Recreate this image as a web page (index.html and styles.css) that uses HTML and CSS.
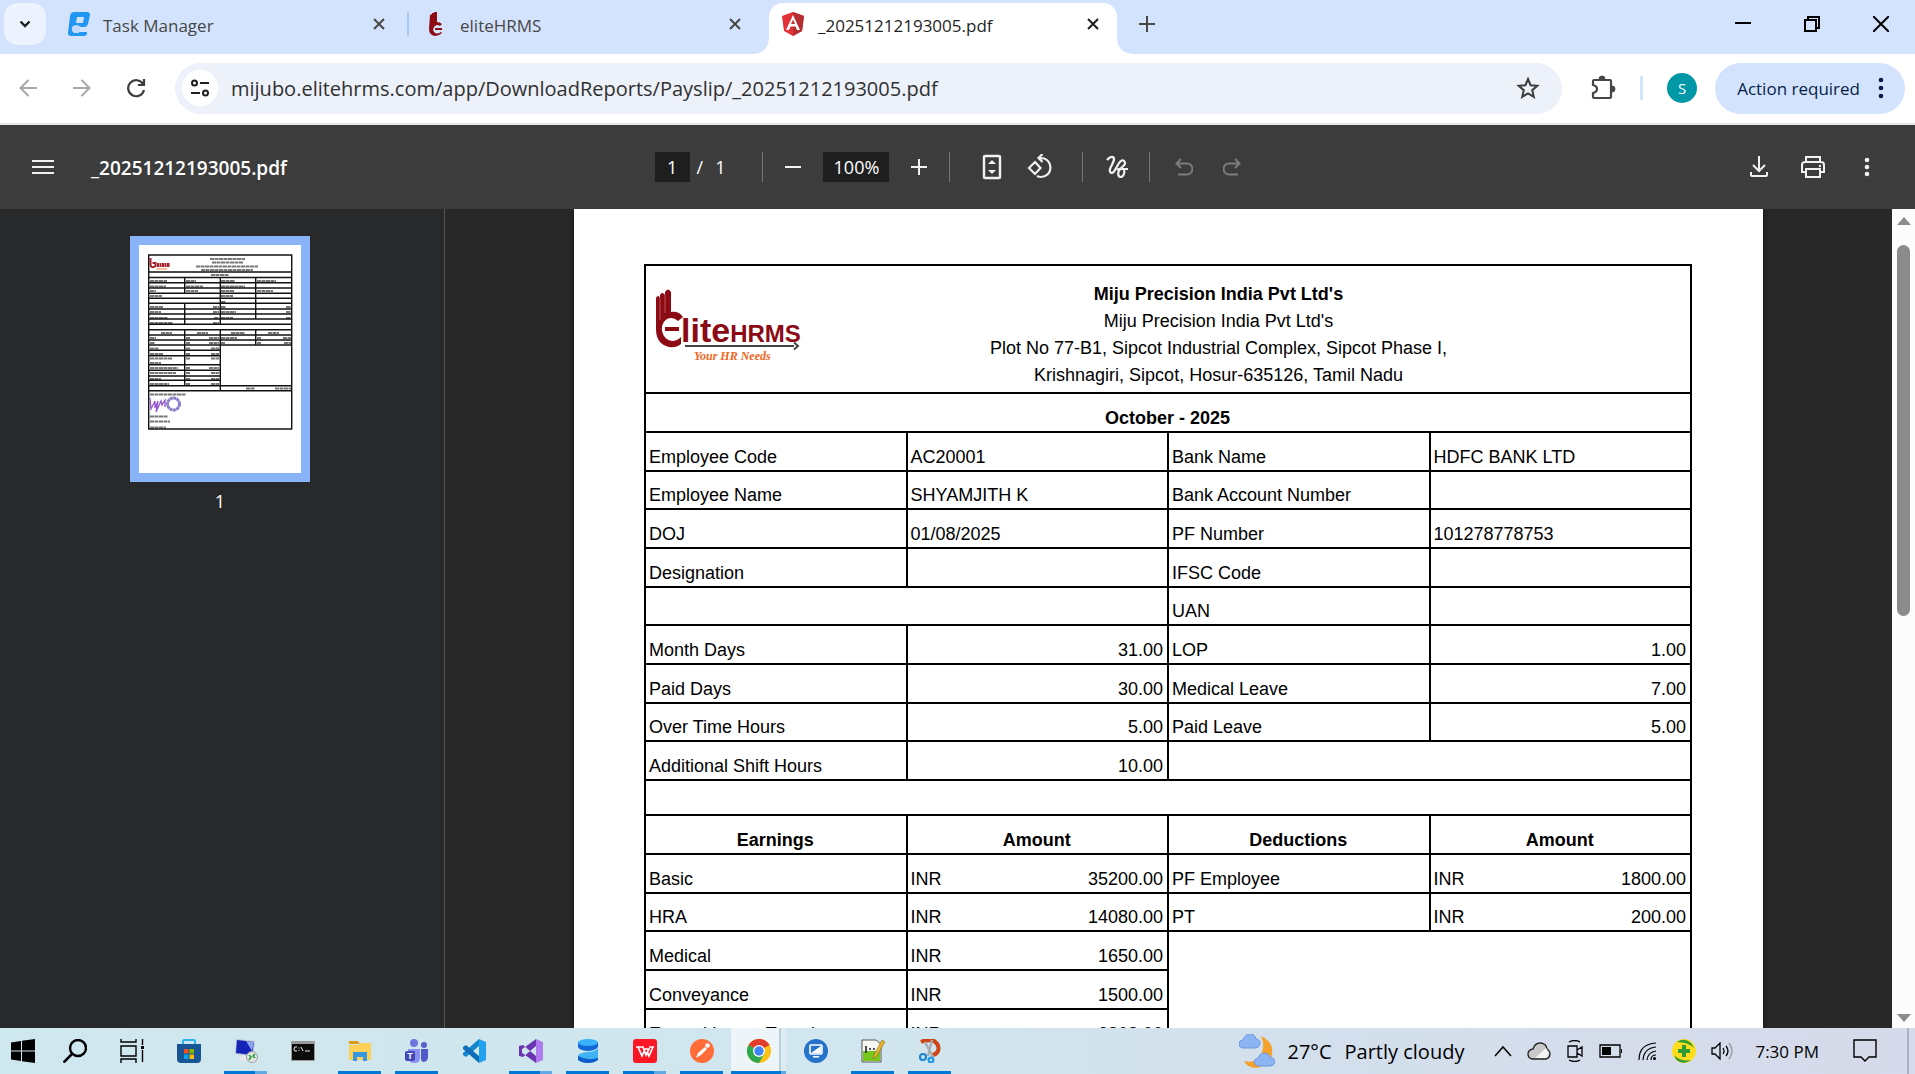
FILE: index.html
```html
<!DOCTYPE html>
<html lang="en">
<head>
    <meta charset="UTF-8">
    <title>_20251212193005.pdf</title>
    <link rel="stylesheet" href="styles.css">
</head>
<body>
<!-- tabs -->
<header class="tab-strip">
    <button class="tab-search" aria-label="Search tabs">
        <svg width="14" height="14" viewBox="0 0 14 14"><path d="M2.500 4.500 7 9l4.500-4.500" fill="none" stroke="#1f1f1f" stroke-width="2.400"/></svg>
    </button>
    <div class="tab">
        <svg width="22" height="24" viewBox="0 0 22 24"><path d="M6 0h13q3 0 3 3l-2 9q-1 3-4 3H9q-2 0-1 3 1 2 4 2h7v1q0 3-3 3H3q-3 0-3-3L2 4q1-4 4-4z" fill="#2196f3"/><path d="M9 5h7l-1 6H8z" fill="#d3e3fd"/><path d="M4 15q4-4 9 0l-2 6H6q-3-2-2-6z" fill="#c3dafa"/></svg>
        <span class="tab-title">Task Manager</span>
        <button class="tab-close" aria-label="Close tab"><svg width="12" height="12" viewBox="0 0 12 12"><path d="M1 1l10 10M11 1 1 11" stroke="#474747" stroke-width="2"/></svg></button>
    </div>
    <span class="tab-line"></span>
    <div class="tab tab-second">
        <svg width="14" height="24" viewBox="0 0 14 24"><path d="M1 3l2-1V1h2V0l3-.500V10q3 0 5 2l-2 2q-3-2-5 0-3 3-1 6 3 3 7 0l1 1q-3 3-7 3-6-1-6-7z" fill="#8e0b16"/><path d="M6 16h7v2H6z" fill="#8e0b16"/></svg>
        <span class="tab-title wide-gap">eliteHRMS</span>
        <button class="tab-close" aria-label="Close tab"><svg width="12" height="12" viewBox="0 0 12 12"><path d="M1 1l10 10M11 1 1 11" stroke="#474747" stroke-width="2"/></svg></button>
    </div>
    <div class="tab tab-active">
        <svg width="24" height="24" viewBox="0 0 24 24"><path d="M12 0 23 4l-2 15-9 5-9-5L1 4z" fill="#e23237"/><path d="M12 0 23 4l-2 15-9 5z" fill="#b52e31"/><path d="M12 3 5 18h3l1.500-3.500h5L16 18h3zM12 7.500l2 4.600h-4z" fill="#fff" fill-rule="evenodd"/></svg>
        <span class="tab-title">_20251212193005.pdf</span>
        <button class="tab-close" aria-label="Close tab"><svg width="12" height="12" viewBox="0 0 12 12"><path d="M1 1l10 10M11 1 1 11" stroke="#1f1f1f" stroke-width="2"/></svg></button>
    </div>
    <button class="tab-new" aria-label="New tab"><svg width="16" height="16" viewBox="0 0 16 16"><path d="M8 0v16M0 8h16" stroke="#474747" stroke-width="2"/></svg></button>
    <div class="window-buttons">
        <button aria-label="Minimize"><svg width="16" height="16" viewBox="0 0 16 16"><path d="M0 7h16" stroke="#000" stroke-width="2"/></svg></button>
        <button aria-label="Restore"><svg width="16" height="16" viewBox="0 0 16 16"><path d="M1 4h11v11H1zM4 4V1h11v11h-3" fill="none" stroke="#000" stroke-width="2"/></svg></button>
        <button aria-label="Close"><svg width="16" height="16" viewBox="0 0 16 16"><path d="M0 0l16 16M16 0 0 16" stroke="#000" stroke-width="2"/></svg></button>
    </div>
</header>

<!-- address bar -->
<nav class="address-bar">
    <div class="nav-buttons">
        <button aria-label="Back"><svg width="18" height="18" viewBox="0 0 18 18"><path d="M18 9H2M9.500 1 1.500 9l8 8" fill="none" stroke="#a8a8a8" stroke-width="2"/></svg></button>
        <button aria-label="Forward"><svg width="18" height="18" viewBox="0 0 18 18"><path d="M0 9h16M8.500 1l8 8-8 8" fill="none" stroke="#a8a8a8" stroke-width="2"/></svg></button>
        <button aria-label="Reload"><svg width="20" height="20" viewBox="0 0 20 20"><path d="M17 6a8 8 0 1 0 1 6M18 1v6h-6" fill="none" stroke="#3c3c3c" stroke-width="2.200"/></svg></button>
    </div>
    <div class="omnibox">
        <button class="site-info" aria-label="Site information"><svg width="20" height="20" viewBox="0 0 20 20"><g fill="none" stroke="#1f1f1f" stroke-width="2"><circle cx="4.500" cy="5" r="2.500"/><circle cx="15.500" cy="15" r="2.500"/><path d="M10 5h9M1 15h9"/></g></svg></button>
        <input class="url" type="text" aria-label="Address" value="mijubo.elitehrms.com/app/DownloadReports/Payslip/_20251212193005.pdf">
        <button aria-label="Bookmark"><svg width="24" height="24" viewBox="0 0 24 24"><path d="M12 3l2.600 6.200 6.700.600-5.100 4.400 1.600 6.600-5.800-3.500-5.800 3.500 1.600-6.600-5.100-4.400 6.700-.600z" fill="none" stroke="#3c3c3c" stroke-width="2"/></svg></button>
    </div>
    <button class="extensions" aria-label="Extensions"><svg width="26" height="26" viewBox="0 0 26 26"><path d="M4 5h16q1 0 1 1v16q0 1-1 1H4q-1 0-1-1v-4q4-1 4-4t-4-4V6q0-1 1-1z" fill="none" stroke="#474747" stroke-width="2.200"/><path d="M9 4a3 3 0 0 1 6 0zM22 11a3 3 0 0 1 0 6z" fill="#474747" stroke="#474747"/></svg></button>
    <span class="bar-line"></span>
    <button class="avatar">S</button>
    <button class="action-pill">Action required
        <svg width="6" height="22" viewBox="0 0 6 22"><g fill="#041e49"><circle cx="3" cy="3" r="2.300"/><circle cx="3" cy="11" r="2.300"/><circle cx="3" cy="19" r="2.300"/></g></svg>
    </button>
</nav>

<!-- pdf toolbar -->
<div class="pdf-toolbar">
    <div class="pdf-left">
        <button aria-label="Menu"><svg width="22" height="16" viewBox="0 0 22 16"><path d="M0 2h22M0 8h22M0 14h22" stroke="#f1f1f1" stroke-width="2"/></svg></button>
        <h1 class="pdf-name">_20251212193005.pdf</h1>
    </div>
    <div class="pdf-center">
        <input class="page-input" type="text" aria-label="Page number" value="1">
        <span class="page-slash">/</span>
        <span class="page-total">1</span>
        <span class="sep sep-wide"></span>
        <button aria-label="Zoom out"><svg width="16" height="16" viewBox="0 0 16 16"><path d="M0 8h16" stroke="#f1f1f1" stroke-width="2"/></svg></button>
        <input class="zoom-input" type="text" aria-label="Zoom level" value="100%">
        <button aria-label="Zoom in"><svg width="16" height="16" viewBox="0 0 16 16"><path d="M0 8h16M8 0v16" stroke="#f1f1f1" stroke-width="2"/></svg></button>
        <span class="sep"></span>
        <button class="tool-first" aria-label="Fit to page"><svg width="20" height="26" viewBox="0 0 20 26"><rect x="2" y="2" width="16" height="22" rx="1" fill="none" stroke="#f1f1f1" stroke-width="2.400"/><path d="M10 6l4 4H6zM10 20l4-4H6z" fill="#f1f1f1"/></svg></button>
        <button class="tool-next" aria-label="Rotate counterclockwise"><svg width="26" height="26" viewBox="0 0 26 26"><path d="M8 8l5.500 6L8 20l-6-6zM11 4h3a9.500 9.500 0 0 1 0 19q-2 0-4-1M15.500 0l-4 4 4 4" fill="none" stroke="#f1f1f1" stroke-width="2.200"/></svg></button>
        <span class="sep sep-tool"></span>
        <button aria-label="Draw"><svg width="24" height="24" viewBox="0 0 24 24"><path d="M2 5q3-4 6-3c3 2-1 7-3 12-1 5 3 5 5 1l4-7q3-4 5-2c3 3-1 5-4 8-3 4-2 8 1 8 4-1 4-8 2-8q-4-1-6 1M18 14h5" fill="none" stroke="#f1f1f1" stroke-width="2.200"/></svg></button>
        <span class="sep sep-history"></span>
        <button aria-label="Undo" disabled><svg width="18" height="18" viewBox="0 0 18 18"><path d="M6 1 1.500 5.500 6 10M2 5.500h10a5 5 0 0 1 0 11H3" fill="none" stroke="#7d7d7d" stroke-width="2"/></svg></button>
        <button class="tool-next" aria-label="Redo" disabled><svg width="18" height="18" viewBox="0 0 18 18"><path d="M12 1l4.500 4.500L12 10M16 5.500H6a5 5 0 0 0 0 11h9" fill="none" stroke="#7d7d7d" stroke-width="2"/></svg></button>
    </div>
    <div class="pdf-right">
        <button aria-label="Download"><svg width="20" height="22" viewBox="0 0 20 22"><path d="M10 0v14M4 9l6 6 6-6M2 16v3q0 1 1 1h14q1 0 1-1v-3" fill="none" stroke="#f1f1f1" stroke-width="2"/></svg></button>
        <button aria-label="Print"><svg width="24" height="22" viewBox="0 0 24 22"><path d="M5 6V1h14v5M5 16H1V9q0-3 3-3h16q3 0 3 3v7h-4M5 13h14v8H5z" fill="none" stroke="#f1f1f1" stroke-width="2"/><circle cx="19" cy="10" r="1.200" fill="#f1f1f1"/></svg></button>
        <button aria-label="More"><svg width="6" height="20" viewBox="0 0 6 20"><g fill="#f1f1f1"><circle cx="3" cy="3" r="2.300"/><circle cx="3" cy="10" r="2.300"/><circle cx="3" cy="17" r="2.300"/></g></svg></button>
    </div>
</div>

<div class="viewer">
    <aside class="thumbs">
        <button class="thumb" aria-label="Page 1">
            <svg width="162" height="228" viewBox="0 0 162 228">
                <rect width="162" height="228" fill="#fff"/>
                <g fill="none" stroke="#777" stroke-width="2" stroke-dasharray="4 .500">
                    <path d="M71 14h35M73 17.500h31M57 21.500h62M62 25h52M72 30h18"/>
                    <path d="M11 36h17M11 41.500h16M11 46h6M11 51h12M47 36h10M47 41.500h17M47 46h12M82 36h14M82 41.500h24M82 46h13M82 51h12M118 36h19M118 46h16M82 57h5"/>
                    <path d="M11 62h13M11 67h11M11 73h18M11 78h23M74 62h6M74 67h6M75 73h5M74 78h6M82 62h5M82 67h15M82 73h12M147 62h5M147 67h5M147 73h5"/>
                    <path d="M22 88h11M58 88h11M92 88h14M129 88h11M11 93h6M11 98h5M11 103.500h9M11 109h13M11 113.500h22M11 118h11M11 123h28M11 128h26M11 134h11M11 139h19"/>
                    <path d="M47 93h4M47 98h4M47 103.500h4M47 109h4M47 113.500h4M47 123h4M47 128h4M47 134h4M47 139h4M70 93h10M70 98h10M72 103.500h8M72 109h8M72 113.500h8M70 123h10M72 128h8M72 134h8M72 139h8M82 93h16M82 98h4M118 93h4M118 98h4M144 93h8M145 98h7M107 143.500h9M136 143.500h16"/>
                    <path d="M11 149.500h36M11 171.500h18M11 176.500h20M11 182.500h16"/>
                </g>
                <g fill="none" stroke="#111" stroke-width="1.400">
                    <path d="M9.700 10h143v174h-143z"/>
                    <path d="M9 27h144M9 32.500h144M9 37.700h144M9 43h144M9 48.300h144M9 53.300h144M9 58.300h144M9 64h144M9 69h144M9 74h144M9 79.300h144M9 84.700h144M9 90h144M9 95h144M9 100h144"/>
                    <path d="M9 105.300h72M9 110.700h72M9 119.700h72M9 125.300h72M9 131h72M9 135.300h72M9 140.700h144M9 145.700h144"/>
                    <path d="M45.700 32.500v15.800M45.700 58.300v21M45.700 84.700v56M81.300 32.500v47M81.300 84.700v61M116.700 32.500V74M116.700 84.700V100"/>
                </g>
                <path d="M11.500 13v7q1 4 5 1v-3h-3" fill="none" stroke="#a3202a" stroke-width="2"/>
                <path d="M18 20h13" stroke="#a3202a" stroke-width="4" stroke-dasharray="2 .500"/>
                <path d="M17 24h11" stroke="#f3873f"/>
                <path d="M11 153l1 11 4-8v7l3-7-2 11 5-11 1 4 3-5v7" fill="none" stroke="#9155d0" stroke-width="1.300"/>
                <circle cx="34.500" cy="159" r="6" fill="none" stroke="#8b7bc8" stroke-width="3" stroke-dasharray="3 .400"/>
            </svg>
        </button>
        <span class="thumb-number">1</span>
    </aside>
    <main class="page-area">
        <article class="page">
            <table class="payslip">
                <tbody>
                <tr class="company-row">
                    <td colspan="4">
                        <div class="company">
                            <svg class="logo" width="148" height="78" viewBox="0 0 148 78">
                                <path d="M1 9q2-4 4 0V6q2-4 5 0V3q3-5 6 0v20q8-1 12 5l-5 4q-5-5-11-2-6 4-5 12 2 9 10 10 5 0 9-4v7q-5 4-12 3Q1 55 1 40z" fill="#8b0a14"/>
                                <path d="M10 38h14v4H10z" fill="#8b0a14"/>
                                <path d="M5 9v22M10 6v18" stroke="#b5525a" fill="none"/>
                                <text x="26" y="53" class="logo-name"><tspan class="logo-lite">lite</tspan><tspan class="logo-hrms">HRMS</tspan></text>
                                <path d="M30 57h109M139 53.500l4 3.500-4 3.500" fill="none" stroke="#444" stroke-width="2"/>
                                <text x="39" y="71" class="logo-tag">Your HR Needs</text>
                            </svg>
                            <div class="company-text">
                                <strong>Miju Precision India Pvt Ltd's</strong><br>
                                Miju Precision India Pvt Ltd's<br>
                                Plot No 77-B1, Sipcot Industrial Complex, Sipcot Phase I,<br>
                                Krishnagiri, Sipcot, Hosur-635126, Tamil Nadu
                            </div>
                        </div>
                    </td>
                </tr>
                <tr><th colspan="4">October - 2025</th></tr>
                <tr><td>Employee Code</td><td>AC20001</td><td>Bank Name</td><td>HDFC BANK LTD</td></tr>
                <tr class="short"><td>Employee Name</td><td>SHYAMJITH K</td><td>Bank Account Number</td><td></td></tr>
                <tr><td>DOJ</td><td>01/08/2025</td><td>PF Number</td><td>101278778753</td></tr>
                <tr><td>Designation</td><td></td><td>IFSC Code</td><td></td></tr>
                <tr class="short"><td colspan="2"></td><td>UAN</td><td></td></tr>
                <tr><td>Month Days</td><td class="num">31.00</td><td>LOP</td><td class="num">1.00</td></tr>
                <tr><td>Paid Days</td><td class="num">30.00</td><td>Medical Leave</td><td class="num">7.00</td></tr>
                <tr class="short"><td>Over Time Hours</td><td class="num">5.00</td><td>Paid Leave</td><td class="num">5.00</td></tr>
                <tr><td>Additional Shift Hours</td><td class="num">10.00</td><td colspan="2"></td></tr>
                <tr class="spacer"><td colspan="4"></td></tr>
                <tr><th>Earnings</th><th>Amount</th><th>Deductions</th><th>Amount</th></tr>
                <tr><td>Basic</td><td><div class="money"><span>INR</span><span>35200.00</span></div></td><td>PF Employee</td><td><div class="money"><span>INR</span><span>1800.00</span></div></td></tr>
                <tr class="short"><td>HRA</td><td><div class="money"><span>INR</span><span>14080.00</span></div></td><td>PT</td><td><div class="money"><span>INR</span><span>200.00</span></div></td></tr>
                <tr><td>Medical</td><td><div class="money"><span>INR</span><span>1650.00</span></div></td><td colspan="2" rowspan="3"></td></tr>
                <tr><td>Conveyance</td><td><div class="money"><span>INR</span><span>1500.00</span></div></td></tr>
                <tr class="two-lines"><td>Earned Leave Travel<br>Allowance</td><td><div class="money"><span>INR</span><span>2808.00</span></div></td></tr>
                </tbody>
            </table>
        </article>
    </main>
    <div class="scrollbar">
        <span class="arrow-up"></span>
        <span class="scroll-thumb"></span>
        <span class="arrow-down"></span>
    </div>
</div>

<!-- taskbar -->
<footer class="taskbar">
    <div class="apps">
        <button class="app-start" aria-label="Start"><svg width="24" height="24" viewBox="0 0 24 24"><path d="M0 3.400 10 2v9.500H0zM11 1.800 24 0v11.500H11zM0 12.500h10V22L0 20.600zM11 12.500h13V24l-13-1.800z"/></svg></button>
        <button aria-label="Search"><svg width="24" height="24" viewBox="0 0 24 24"><circle cx="15" cy="9" r="8" fill="none" stroke="#000" stroke-width="2.400"/><path d="M9 15l-8.500 8.500" stroke="#000" stroke-width="2.600"/></svg></button>
        <button aria-label="Task view"><svg width="24" height="24" viewBox="0 0 24 24"><path d="M1 0v3h15V0M1 24v-4h15v4M1 7h15v10H1zM22.500 0v6M22.500 11v12" fill="none" stroke="#000" stroke-width="1.400"/><path d="M21 7h3v3h-3z"/></svg></button>
        <button aria-label="Microsoft Store"><svg width="24" height="24" viewBox="0 0 24 24"><path d="M6 6V2q0-1 1-1h10q1 0 1 1v4" fill="none" stroke="#2ab5ee" stroke-width="2"/><path d="M0 5h24v15q0 4-4 4H4q-4 0-4-4z" fill="#175596"/><path d="M7 10h4.500v4.500H7z" fill="#f25022"/><path d="M12.500 10H17v4.500h-4.500z" fill="#7fba00"/><path d="M7 15.500h4.500V20H7z" fill="#00a4ef"/><path d="M12.500 15.500H17V20h-4.500z" fill="#ffb900"/></svg></button>
        <button class="open multi" aria-label="Remote Desktop"><svg width="24" height="24" viewBox="0 0 24 24"><path d="M2 0l19 2-2 15-18-2z" fill="#b9c1cd"/><path d="M3 1l17 2-2 13-16-2z" fill="#1523b8"/><path d="M12 2l8 1-2 9z" fill="#8ba4f0"/><path d="M6 17h8v5H4z" fill="#e3e6ea"/><circle cx="18" cy="18" r="5.500" fill="#e3e6e2" stroke="#9aa0a0"/><path d="M15 16l2 2-2 3M21 15l-2 2 2 2" fill="none" stroke="#2f9e35" stroke-width="1.600"/></svg></button>
        <button aria-label="Command Prompt"><svg width="24" height="20" viewBox="0 0 24 20"><rect width="24" height="20" rx="1" fill="#9a9a9a"/><path d="M1 3h22v16H1z" fill="#0b0b0b"/><path d="M6 6q-3-1-3 2t3 2M8 6.500v1M8 9v1M10 6l2 4M14 10h5" fill="none" stroke="#eee"/></svg></button>
        <button class="open" aria-label="File Explorer"><svg width="24" height="20" viewBox="0 0 24 20"><path d="M1 0h9l2 3h-11z" fill="#e09a14"/><path d="M1 4h10l2-2h10v17H1z" fill="#ffd057"/><path d="M5 20v-8q0-1 1-1h12q1 0 1 1v8h-4v-4H9v4z" fill="#3895e0"/></svg></button>
        <button class="open" aria-label="Teams"><svg width="24" height="24" viewBox="0 0 24 24"><circle cx="9" cy="4" r="4" fill="#6f75dd"/><circle cx="19" cy="6" r="3" fill="#5a61cf"/><path d="M3 10h12v9q0 5-6 5-5 0-6-5z" fill="#8b8ff0"/><path d="M16 10h7v8q0 4-4 5-3 0-3-4z" fill="#5058cc"/><rect y="12" width="10" height="10" rx="2" fill="#4048b8"/><text x="5" y="20" class="app-letter">T</text></svg></button>
        <button aria-label="VS Code"><svg width="24" height="24" viewBox="0 0 24 24"><path d="M17 0l7 3v18l-7 3z" fill="#22a2ee"/><path d="M17 0v7L4 18l-3-2V14z" fill="#1485cf"/><path d="M17 24v-7L4 6 1 8v2z" fill="#0e6fb8"/></svg></button>
        <button class="open multi" aria-label="Visual Studio"><svg width="24" height="24" viewBox="0 0 24 24"><path d="M17 0l7 3v18l-7 3z" fill="#b07af0"/><path d="M17 0v7L4 18l-4-1V7l4-1 13 11v7L4 14.500 3 14v-4l1-.500z" fill="#6a35b1" fill-rule="evenodd"/></svg></button>
        <button class="open" aria-label="SQL tools"><svg width="22" height="24" viewBox="0 0 22 24"><path d="M1 3v5q1 3 9 4 8 0 11-4V3z" fill="#1368d8"/><ellipse cx="11" cy="3.500" rx="10" ry="3.500" fill="#38b2f8"/><path d="M21 9v12q-4 3-10 3T1 21v-4q0-3 9-4 8 0 11-4z" fill="#3fb4f5"/><path d="M1 17q9 5 20 2v2q-4 3-10 3T1 21z" fill="#0f5ccb"/></svg></button>
        <button class="open multi" aria-label="WPS Office"><svg width="24" height="24" viewBox="0 0 24 24"><rect width="24" height="24" rx="3" fill="#fb1724"/><path d="M3 8h7l3 8 3-6h-5M5 8l4 9 3-7M20 8l-4 9-2-4M16 8h5" fill="none" stroke="#fff" stroke-width="1.700"/></svg></button>
        <button class="open" aria-label="Postman"><svg width="24" height="24" viewBox="0 0 24 24"><circle cx="12" cy="12" r="12" fill="#ff6c37"/><path d="M6 19l2-5 7-6 2 2-6 6z" fill="#fff"/><circle cx="17.500" cy="6.500" r="2.300" fill="#fff"/></svg></button>
        <button class="open multi current" aria-label="Chrome"><svg width="24" height="24" viewBox="0 0 24 24"><circle cx="12" cy="12" r="12" fill="#fbc116"/><path d="M12 12 1.600 6a12 12 0 0 1 20.800 0z" fill="#e33b2e"/><path d="M12 12 1.600 6A12 12 0 0 0 12 24l5.200-9z" fill="#2da94f"/><circle cx="12" cy="12" r="6" fill="#fff"/><circle cx="12" cy="12" r="4.700" fill="#4285f4"/></svg></button>
        <button aria-label="Remote access"><svg width="24" height="24" viewBox="0 0 24 24"><circle cx="12" cy="12" r="12" fill="#2673cc"/><rect x="6" y="6" width="12" height="9" rx="1" fill="none" stroke="#fff" stroke-width="1.600"/><path d="M7 14l10-7v7zM9 17h6v1.500H9z" fill="#fff"/></svg></button>
        <button class="open" aria-label="Notepad++"><svg width="24" height="24" viewBox="0 0 24 24"><path d="M1 1h14l5 4v18H1z" fill="#f6f8f2" stroke="#555"/><path d="M2 12h17v10H2z" fill="#76c61b"/><path d="M5 7v7M8 10h2M12 10h2" stroke="#222" stroke-width="1.600"/><path d="M21 1l3 2-9 15-3 2 1-4z" fill="#e9b632" stroke="#8a6712" stroke-width=".600"/></svg></button>
        <button class="open" aria-label="Snipping Tool"><svg width="22" height="24" viewBox="0 0 22 24"><path d="M2 3q6-3 13-1 6 4 4 10-2 4-6 4" fill="none" stroke="#cf4315" stroke-width="4"/><path d="M13 1l-4 16M6 3l8 15" stroke="#a8adb2" stroke-width="2.400"/><circle cx="4" cy="18" r="3" fill="none" stroke="#1d87d6" stroke-width="2.200"/><circle cx="12" cy="21" r="2.400" fill="none" stroke="#1d9be6" stroke-width="2.200"/></svg></button>
    </div>
    <div class="tray">
        <button class="weather">
            <svg width="36" height="34" viewBox="0 0 36 34"><path d="M22 2q13 6 11 18-3 12-15 14-10 0-13-7 10 3 16-5 6-9 1-20z" fill="#f5a02a"/><path d="M5 14q-5 0-5-4 0-4 4-4 2-6 7-6 5 0 6 5 5 1 4 5-1 4-5 4zM20 32q-4 0-5-4 0-3 4-4 2-5 6-5 5 0 6 4 5 1 5 5-1 4-5 4z" fill="#8db4f2" stroke="#6c97e2"/></svg>
            <span class="temperature">27°C</span><span>Partly cloudy</span>
        </button>
        <div class="tray-icons">
            <button aria-label="Show hidden icons"><svg width="18" height="12" viewBox="0 0 18 12"><path d="M1 11l8-9 8 9" fill="none" stroke="#000" stroke-width="1.500"/></svg></button>
            <button aria-label="OneDrive"><svg width="24" height="18" viewBox="0 0 24 18"><path d="M5 17q-4-1-4-5t5-5q2-6 7-6 6 0 7 6 3 2 3 5 0 4-4 5z" fill="#c9c9c9" stroke="#222" stroke-width="1.300"/><path d="M8 16 19 6l3 5-3 5z" fill="#f4f4f4"/></svg></button>
            <button aria-label="Meet Now"><svg width="18" height="22" viewBox="0 0 18 22"><path d="M2 6h9v11H2zM11 10l5-3v9l-5-3M3 2q6-3 11 0M3 20q6 3 11 0" fill="none" stroke="#000" stroke-width="1.300"/></svg></button>
            <button aria-label="Battery"><svg width="23" height="14" viewBox="0 0 23 14"><path d="M1 1h20v12H1z" fill="none" stroke="#000" stroke-width="1.300"/><path d="M3 3h9v8H3zM22 5h1v4h-1z"/></svg></button>
            <button aria-label="Network"><svg width="20" height="18" viewBox="0 0 20 18"><path d="M2 18Q2 2 19 1M6 18Q7 6 19 5M10 18q1-8 9-9M14 18q0-5 5-5" fill="none" stroke="#000" stroke-width="1.200"/><circle cx="17.500" cy="16.500" r="1.500"/></svg></button>
            <button aria-label="Security"><svg width="24" height="24" viewBox="0 0 24 24"><circle cx="12" cy="12" r="12" fill="#ffdc1e"/><path d="M5 3q7-5 14 1l3 5q-6-6-17-6zM2 16q6 7 17 5-7 5-13 1-3-2-4-6zM10 6h4v4h4v4h-4v4h-4v-4H6v-4h4z" fill="#2f9c34"/></svg></button>
            <button aria-label="Volume"><svg width="22" height="18" viewBox="0 0 22 18"><path d="M1 6h3l5-5v16l-5-5H1zM12 6q2 3 0 6M15 4q4 5 0 10" fill="none" stroke="#000" stroke-width="1.300"/><path d="M18 1q6 8 0 16" fill="none" stroke="#999" stroke-width="1.300"/></svg></button>
        </div>
        <button class="clock">7:30 PM</button>
        <button class="notifications" aria-label="Notifications"><svg width="24" height="24" viewBox="0 0 24 24"><path d="M1 1h22v17h-7l-4 4-4-4H1z" fill="none" stroke="#000" stroke-width="1.400"/></svg></button>
        <button class="show-desktop" aria-label="Show desktop"></button>
    </div>
</footer>
</body>
</html>
```
FILE: styles.css
```css
* {
    box-sizing: border-box;
}

body {
    margin: 0;
    height: 100vh;
    display: flex;
    flex-direction: column;
    overflow: hidden;
    font-family: "Open Sans", "Noto Sans", sans-serif;
    color: #1f1f1f;
}

button {
    display: flex;
    align-items: center;
    justify-content: center;
    flex: none;
    padding: 0;
    border: 0;
    background: none;
    font: inherit;
    color: inherit;
}

input {
    border: 0;
    padding: 0;
    font: inherit;
}

svg {
    flex: none;
    display: block;
}

/* tabs */
.tab-strip {
    display: flex;
    align-items: center;
    height: 54px;
    padding-left: 4px;
    background-color: #d3e3fd;
    font-size: 17px;
}

.tab-search {
    width: 42px;
    height: 42px;
    margin-bottom: 6px;
    border-radius: 14px;
    background-color: #edf3fe;
}

.tab {
    flex: 0 1 361px;
    display: flex;
    align-items: center;
    height: 48px;
    padding: 0 18px 6px 22px;
    color: #474747;
}

.tab-second {
    flex-basis: 360px;
    padding: 0 24px 6px 20px;
}

.tab-title {
    flex: 1;
    padding: 2px 0 0 13px;
    white-space: nowrap;
}

.wide-gap {
    padding-left: 17px;
}

.tab-close {
    width: 20px;
    height: 20px;
}

.tab-line {
    width: 2px;
    height: 24px;
    margin-bottom: 6px;
    background-color: #a8c7fa;
}

.tab-active {
    position: relative;
    flex-basis: 348px;
    height: 51px;
    margin-top: 3px;
    padding: 0 14px 9px 12px;
    border-radius: 14px 14px 0 0;
    background-color: #fff;
    color: #1f1f1f;
}

.tab-active::before,
.tab-active::after {
    content: "";
    position: absolute;
    bottom: 0;
    width: 14px;
    height: 14px;
}

.tab-active::before {
    left: -14px;
    background: radial-gradient(circle at 0 0, transparent 13px, #fff 14px);
}

.tab-active::after {
    right: -14px;
    background: radial-gradient(circle at 100% 0, transparent 13px, #fff 14px);
}

.tab-new {
    width: 32px;
    height: 32px;
    margin: 0 0 6px 14px;
}

.window-buttons {
    display: flex;
    margin: 0 0 6px auto;
}

.window-buttons button {
    width: 69px;
    height: 46px;
}

/* address bar */
.address-bar {
    display: flex;
    align-items: center;
    height: 71px;
    padding: 0 10px 1px 12px;
    border-bottom: 2px solid #e3e6ea;
    background-color: #fff;
}

.nav-buttons {
    display: flex;
    gap: 22px;
}

.nav-buttons button {
    width: 32px;
    height: 32px;
}

.omnibox {
    flex: 1;
    display: flex;
    align-items: center;
    height: 51px;
    margin-left: 23px;
    padding: 0 22px 0 7px;
    border-radius: 26px;
    background-color: #ecf1fa;
}

.site-info {
    width: 36px;
    height: 36px;
    border-radius: 50%;
    background-color: #fff;
}

.url {
    flex: 1;
    margin-left: 13px;
    background: none;
    font-size: 20px;
    color: #303030;
}

.extensions {
    margin-left: 28px;
}

.bar-line {
    width: 3px;
    height: 24px;
    margin: 0 24px;
    background-color: #d3e3fd;
}

.avatar {
    width: 30px;
    height: 30px;
    border-radius: 50%;
    background-color: #0097a7;
    font-size: 15px;
    color: #fff;
}

.action-pill {
    gap: 18px;
    height: 51px;
    margin-left: 18px;
    padding: 0 21px 0 22px;
    border-radius: 26px;
    background-color: #d3e3fd;
    font-size: 17px;
    color: #041e49;
}

/* pdf toolbar */
.pdf-toolbar {
    display: grid;
    grid-template-columns: 1fr auto 1fr;
    align-items: center;
    height: 84px;
    padding: 0 32px 0 20px;
    background-color: #3c3c3c;
    font-size: 18px;
    color: #fff;
}

.pdf-toolbar button {
    width: 32px;
    height: 32px;
}

.pdf-left,
.pdf-center,
.pdf-right {
    display: flex;
    align-items: center;
}

.pdf-left {
    gap: 32px;
    padding-left: 7px;
}

.pdf-name {
    margin: 0;
    padding-top: 2px;
    font-size: 19px;
    font-weight: 600;
}

.page-input,
.zoom-input {
    height: 30px;
    background-color: #1e1e1e;
    text-align: center;
    color: #fff;
}

.page-input {
    width: 35px;
}

.zoom-input {
    width: 66px;
    margin: 0 14px;
}

.page-slash {
    margin-left: 7px;
}

.page-total {
    margin-left: 12px;
}

.sep {
    width: 1px;
    height: 30px;
    margin: 0 14px;
    background-color: #777;
}

.sep-wide {
    margin-left: 37px;
}

.sep-tool {
    margin: 0 18px 0 26px;
}

.sep-history {
    margin: 0 18px 0 16px;
}

.tool-first {
    margin-left: 12px;
}

.tool-next {
    margin-left: 16px;
}

.pdf-right {
    justify-content: flex-end;
    gap: 22px;
}

/* viewer */
.viewer {
    flex: 1;
    display: flex;
    min-height: 0;
    background-color: #282828;
}

.thumbs {
    flex: none;
    display: flex;
    flex-direction: column;
    align-items: center;
    width: 445px;
    padding: 27px 4px 0 0;
    border-right: 1px solid #555;
    background-color: #28292a;
    color: #fff;
}

.thumb {
    border: 9px solid #8ab4f8;
}

.thumb-number {
    margin-top: 7px;
    font-size: 18px;
    line-height: 24px;
}

.page-area {
    flex: 1;
    display: flex;
    justify-content: center;
    overflow: hidden;
}

.page {
    flex: 0 1 1189px;
    padding: 55px 71px 0 70px;
    background-color: #fff;
    box-shadow: 0 0 6px #111;
}

.payslip {
    width: 100%;
    table-layout: fixed;
    border-collapse: collapse;
    font: 18px/21px "Liberation Sans", Arial, sans-serif;
    color: #000;
}

.payslip td,
.payslip th {
    height: 39px;
    padding: 0 4px 2px 3px;
    border: 2px solid #000;
    vertical-align: bottom;
}

.payslip .short td {
    height: 38px;
}

.payslip .spacer td {
    height: 35px;
}

.payslip .company-row td {
    height: 128px;
    padding: 0;
    vertical-align: top;
}

.payslip .two-lines td {
    height: 58px;
    padding-top: 14px;
    vertical-align: top;
}

.payslip .num {
    text-align: right;
}

.money {
    display: flex;
    justify-content: space-between;
}

.company {
    display: flex;
    padding: 15px 56px 0 9px;
}

.logo {
    margin-top: 8px;
}

.logo-name {
    font-weight: bold;
    fill: #8b0a14;
}

.logo-lite {
    font-size: 34px;
}

.logo-hrms {
    font-size: 24px;
}

.logo-tag {
    font: italic bold 12px "Liberation Serif", serif;
    fill: #f26522;
}

.company-text {
    flex: 1;
    line-height: 27px;
    text-align: center;
}

/* scrollbar */
.scrollbar {
    flex: none;
    display: flex;
    flex-direction: column;
    align-items: center;
    width: 23px;
    padding: 8px 0 6px;
    background-color: #fcfcfc;
}

.scroll-thumb {
    width: 13px;
    height: 371px;
    margin: 20px 0 auto;
    border-radius: 7px;
    background-color: #8b8b8b;
}

.arrow-up,
.arrow-down {
    border: 7px solid transparent;
}

.arrow-up {
    border-top: 0;
    border-bottom: 8px solid #8b8b8b;
}

.arrow-down {
    border-bottom: 0;
    border-top: 8px solid #8b8b8b;
}

/* taskbar */
.taskbar {
    display: flex;
    justify-content: space-between;
    height: 46px;
    background-image: linear-gradient(90deg, #cfe7ee, #d1e6ee 45%, #d3dfec 70%, #d6daea);
    color: #000;
}

.apps,
.tray,
.tray-icons {
    display: flex;
    align-items: center;
}

.apps button {
    position: relative;
    width: 57px;
    height: 46px;
}

.apps .app-start {
    width: 46px;
}

.apps .open::after {
    content: "";
    position: absolute;
    bottom: 0;
    left: 7px;
    right: 7px;
    height: 3px;
    background-color: #0078d7;
}

.apps .multi::after {
    background-image: linear-gradient(90deg, #0078d7 31px, #62aae6 31px);
}

.apps .current {
    background-image: linear-gradient(90deg, transparent 1px, #edf5f9 1px, #edf5f9 49px, #b9cfd9 49px, #b9cfd9 51px, #dfebf2 51px, #dfebf2 56px, transparent 56px);
}

.apps .current::after {
    left: 1px;
    right: 1px;
    background-image: linear-gradient(90deg, #0078d7 50px, #62aae6 50px);
}

.app-letter {
    font: bold 9px "Liberation Sans", Arial, sans-serif;
    text-anchor: middle;
    fill: #fff;
}

.weather {
    margin-right: 30px;
    font-size: 20px;
}

.temperature {
    margin: 0 13px 0 12px;
}

.tray-icons {
    gap: 15px;
}

.clock {
    margin: 0 34px 0 22px;
    font-size: 17px;
}

.notifications {
    margin-right: 30px;
}

.show-desktop {
    width: 8px;
    height: 46px;
    border-left: 2px solid #a9b3c4;
}
```
